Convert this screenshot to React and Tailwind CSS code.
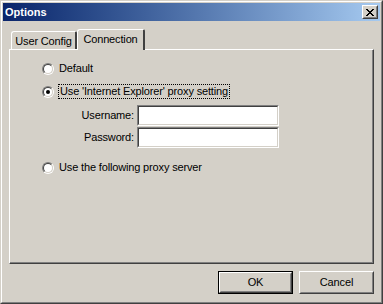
import React from "react";

function Radio({ checked }) {
  return (
    <div className="w-3 h-3 shrink-0 rounded-full border border-t-[#808080] border-l-[#808080] border-r-white border-b-white flex">
      <div className="flex-1 rounded-full border border-t-[#404040] border-l-[#404040] border-r-[#d4d0c8] border-b-[#d4d0c8] bg-white flex items-center justify-center">
        {checked && <div className="w-1 h-1 rounded-full bg-black" />}
      </div>
    </div>
  );
}

function Edit() {
  return (
    <div className="w-[142px] h-[21px] border border-t-[#808080] border-l-[#808080] border-r-white border-b-white flex">
      <div className="flex-1 border border-t-[#404040] border-l-[#404040] border-r-[#d4d0c8] border-b-[#d4d0c8] bg-white" />
    </div>
  );
}

function Button({ children, isDefault }) {
  const inner = (
    <div className="flex-1 border border-t-white border-l-white border-r-[#404040] border-b-[#404040] flex">
      <div className="flex-1 border border-t-[#d4d0c8] border-l-[#d4d0c8] border-r-[#808080] border-b-[#808080] flex items-center justify-center text-black">
        {children}
      </div>
    </div>
  );
  if (isDefault) {
    return (
      <div className="w-[75px] h-[23px] border border-black flex">{inner}</div>
    );
  }
  return <div className="w-[75px] h-[23px] flex">{inner}</div>;
}

export default function App() {
  return (
    <div className="w-[383px] h-[304px] bg-[#d4d0c8] border border-t-[#d4d0c8] border-l-[#d4d0c8] border-r-[#404040] border-b-[#404040] font-['Liberation_Sans',Arial,sans-serif] text-[11px] tracking-[-0.15px] text-black leading-none select-none">
      <div className="h-full border border-t-white border-l-white border-r-[#808080] border-b-[#808080] p-px flex flex-col">
        {/* Title bar */}
        <div className="h-[18px] bg-gradient-to-r from-[#0a246a] to-[#a6caf0] flex items-center pl-[2px] pr-[2px]">
          <span className="text-white font-bold text-[11px] tracking-normal flex-1">Options</span>
          <div className="w-4 h-[14px] bg-[#d4d0c8] border border-t-white border-l-white border-r-[#404040] border-b-[#404040] flex">
            <div className="flex-1 border border-t-[#d4d0c8] border-l-[#d4d0c8] border-r-[#808080] border-b-[#808080] flex items-center justify-center">
              <svg width="8" height="7" viewBox="0 0 8 7" shapeRendering="crispEdges">
                <g fill="#000">
                  <rect x="0" y="0" width="2" height="1" />
                  <rect x="6" y="0" width="2" height="1" />
                  <rect x="1" y="1" width="2" height="1" />
                  <rect x="5" y="1" width="2" height="1" />
                  <rect x="2" y="2" width="4" height="1" />
                  <rect x="3" y="3" width="2" height="1" />
                  <rect x="2" y="4" width="4" height="1" />
                  <rect x="1" y="5" width="2" height="1" />
                  <rect x="5" y="5" width="2" height="1" />
                  <rect x="0" y="6" width="2" height="1" />
                  <rect x="6" y="6" width="2" height="1" />
                </g>
              </svg>
            </div>
          </div>
        </div>

        {/* Body */}
        <div className="flex-1 flex flex-col px-[6px] pt-[8px]">
          {/* Tabs */}
          <div className="h-[20px] flex items-end">
            <div className="ml-[2px] w-[66px] h-[18px] border-t border-l border-t-white border-l-white border-r-2 border-r-[#404040] rounded-tl-[3px] rounded-tr-[2px] flex items-center justify-center pt-[2px]">
              User Config
            </div>
            <div className="relative z-10 -mb-px w-[68px] h-[21px] bg-[#d4d0c8] border-t border-l border-t-white border-l-white border-r-2 border-r-[#404040] rounded-tl-[3px] rounded-tr-[2px] flex items-start justify-center pt-[4px]">
              Connection
            </div>
          </div>

          {/* Panel */}
          <div className="h-[215px] border border-t-white border-l-white border-r-[#404040] border-b-[#404040] flex">
            <div className="flex-1 border-r border-b border-r-[#808080] border-b-[#808080] flex flex-col pl-[32px] pt-[12px]">
              <div className="flex items-center h-[13px]">
                <Radio />
                <span className="ml-[5px]">Default</span>
              </div>
              <div className="flex items-center h-[15px] mt-[9px]">
                <Radio checked />
                <span className="ml-[4px] border border-dotted border-black px-px h-[15px] flex items-center">
                  Use 'Internet Explorer' proxy setting
                </span>
              </div>
              <div className="flex items-center mt-[6px] ml-[32px]">
                <span className="w-[60px] text-right">Username:</span>
                <div className="ml-[3px]"><Edit /></div>
              </div>
              <div className="flex items-center mt-px ml-[32px]">
                <span className="w-[60px] text-right">Password:</span>
                <div className="ml-[3px]"><Edit /></div>
              </div>
              <div className="flex items-center h-[13px] mt-[13px]">
                <Radio />
                <span className="ml-[5px]">Use the following proxy server</span>
              </div>
            </div>
          </div>

          {/* Buttons */}
          <div className="flex justify-end gap-[6px] mt-[7px]">
            <Button isDefault>OK</Button>
            <Button>Cancel</Button>
          </div>
        </div>
      </div>
    </div>
  );
}
